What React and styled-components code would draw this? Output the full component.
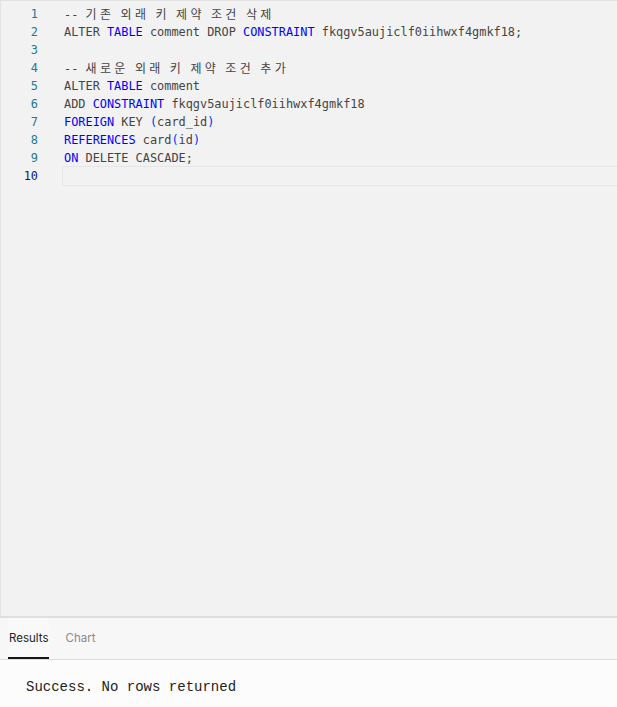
import React from 'react';
import styled, { createGlobalStyle } from 'styled-components';

const GlobalStyle = createGlobalStyle`
  html, body, #root {
    margin: 0;
    height: 100%;
  }
  body {
    background: #fcfcfc;
    font-family: "Inter", "Liberation Sans", sans-serif;
  }
`;

const Page = styled.div`
  display: flex;
  flex-direction: column;
  height: 100vh;
`;

const Editor = styled.div`
  flex: 1;
  background: #f2f2f2;
  border-top: 1px solid #e2e2e2;
  border-left: 1px solid #e2e2e2;
  padding-top: 4px;
  font-family: "DejaVu Sans Mono", "Liberation Mono", "Noto Sans CJK KR", monospace;
  font-size: 11.9px;
  overflow: hidden;
`;

const Line = styled.div`
  display: flex;
  height: 18px;
  line-height: 18px;
`;

const Gutter = styled.span`
  width: 37px;
  flex: none;
  text-align: right;
  color: ${(p) => (p.$active ? '#0b216f' : '#237893')};
`;

const Code = styled.span`
  flex: 1;
  margin-left: 24px;
  padding-left: 1px;
  white-space: pre;
  color: #444;
  border: 1px solid ${(p) => (p.$active ? '#e6e6e6' : 'transparent')};
  border-right: none;
  margin-top: -1px;
  height: 18px;
  line-height: 18px;
`;

const Kw = styled.span`
  color: #0000ff;
`;

const Paren = styled.span`
  color: #0431fa;
`;

const Hangul = styled.span`
  font-family: "Noto Sans CJK KR", sans-serif;
  font-size: 12px;
  letter-spacing: 3.4px;
`;

const Divider = styled.div`
  height: 2px;
  background: #dedede;
`;

const TabBar = styled.div`
  display: flex;
  gap: 15px;
  padding-left: 8px;
  height: 41px;
  background: #f7f7f7;
  border-bottom: 1px solid #dcdcdc;
`;

const Tab = styled.div`
  display: flex;
  align-items: center;
  padding: 0 1px;
  font-size: 11.5px;
  color: ${(p) => (p.$active ? '#222' : '#8a8a8a')};
  background: ${(p) => (p.$active ? '#f9f9f9' : 'transparent')};
  border-bottom: 2px solid ${(p) => (p.$active ? '#151515' : 'transparent')};
`;

const Results = styled.div`
  flex: none;
  height: 47px;
  box-sizing: border-box;
  padding: 19px 0 0 26px;
  background: #fcfcfc;
  font-family: "Liberation Mono", monospace;
  font-size: 14px;
  line-height: 17px;
  color: #222;
`;

const lines = [
  <><span>-- </span><Hangul>기존 외래 키 제약 조건 삭제</Hangul></>,
  <>ALTER <Kw>TABLE</Kw> comment DROP <Kw>CONSTRAINT</Kw> fkqgv5aujiclf0iihwxf4gmkf18;</>,
  <></>,
  <><span>-- </span><Hangul>새로운 외래 키 제약 조건 추가</Hangul></>,
  <>ALTER <Kw>TABLE</Kw> comment</>,
  <>ADD <Kw>CONSTRAINT</Kw> fkqgv5aujiclf0iihwxf4gmkf18</>,
  <><Kw>FOREIGN</Kw> KEY <Paren>(</Paren>card_id<Paren>)</Paren></>,
  <><Kw>REFERENCES</Kw> card<Paren>(</Paren>id<Paren>)</Paren></>,
  <><Kw>ON</Kw> DELETE CASCADE;</>,
  <></>,
];

export default function App() {
  return (
    <Page>
      <GlobalStyle />
      <Editor>
        {lines.map((content, i) => {
          const active = i === lines.length - 1;
          return (
            <Line key={i}>
              <Gutter $active={active}>{i + 1}</Gutter>
              <Code $active={active}>{content}</Code>
            </Line>
          );
        })}
      </Editor>
      <Divider />
      <TabBar>
        <Tab $active>Results</Tab>
        <Tab>Chart</Tab>
      </TabBar>
      <Results>Success. No rows returned</Results>
    </Page>
  );
}
